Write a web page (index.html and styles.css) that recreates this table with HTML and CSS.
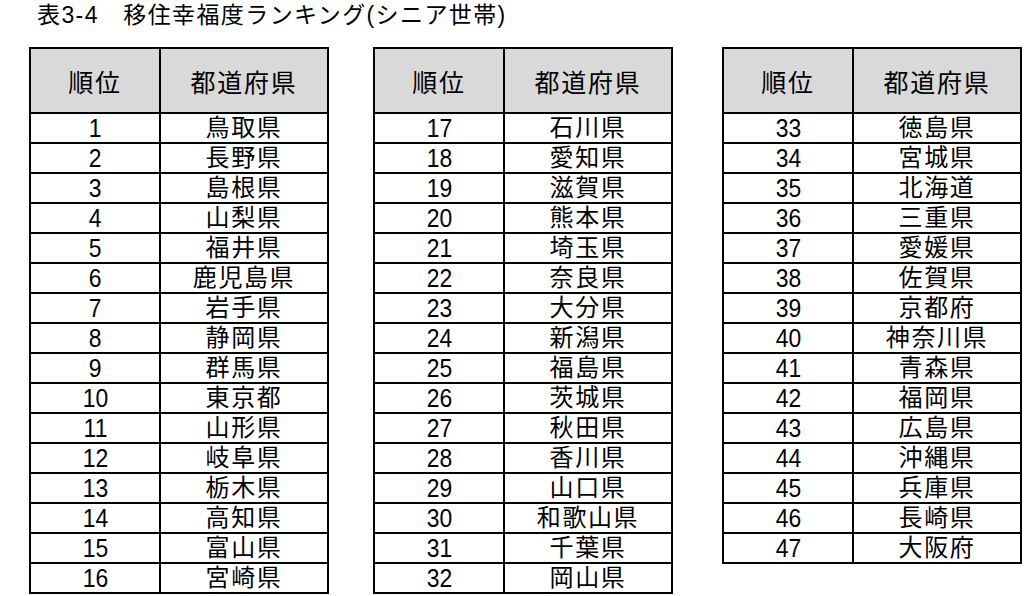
FILE: index.html
```html
<!DOCTYPE html>
<html lang="ja">
<head>
<meta charset="utf-8">
<title>移住幸福度ランキング（シニア世帯）</title>
<link rel="stylesheet" href="styles.css">
</head>
<body>
<div class="page">
  <h1 class="title">表3-4　移住幸福度ランキング(シニア世帯)</h1>
  <div class="tables">
    <table class="rank">
      <colgroup><col class="c1"><col class="c2"></colgroup>
      <thead><tr><th>順位</th><th>都道府県</th></tr></thead>
      <tbody>
        <tr><td><span class="n">1</span></td><td>鳥取県</td></tr>
        <tr><td><span class="n">2</span></td><td>長野県</td></tr>
        <tr><td><span class="n">3</span></td><td>島根県</td></tr>
        <tr><td><span class="n">4</span></td><td>山梨県</td></tr>
        <tr><td><span class="n">5</span></td><td>福井県</td></tr>
        <tr><td><span class="n">6</span></td><td>鹿児島県</td></tr>
        <tr><td><span class="n">7</span></td><td>岩手県</td></tr>
        <tr><td><span class="n">8</span></td><td>静岡県</td></tr>
        <tr><td><span class="n">9</span></td><td>群馬県</td></tr>
        <tr><td><span class="n">10</span></td><td>東京都</td></tr>
        <tr><td><span class="n">11</span></td><td>山形県</td></tr>
        <tr><td><span class="n">12</span></td><td>岐阜県</td></tr>
        <tr><td><span class="n">13</span></td><td>栃木県</td></tr>
        <tr><td><span class="n">14</span></td><td>高知県</td></tr>
        <tr><td><span class="n">15</span></td><td>富山県</td></tr>
        <tr><td><span class="n">16</span></td><td>宮崎県</td></tr>
      </tbody>
    </table>
    <table class="rank">
      <colgroup><col class="c1"><col class="c2"></colgroup>
      <thead><tr><th>順位</th><th>都道府県</th></tr></thead>
      <tbody>
        <tr><td><span class="n">17</span></td><td>石川県</td></tr>
        <tr><td><span class="n">18</span></td><td>愛知県</td></tr>
        <tr><td><span class="n">19</span></td><td>滋賀県</td></tr>
        <tr><td><span class="n">20</span></td><td>熊本県</td></tr>
        <tr><td><span class="n">21</span></td><td>埼玉県</td></tr>
        <tr><td><span class="n">22</span></td><td>奈良県</td></tr>
        <tr><td><span class="n">23</span></td><td>大分県</td></tr>
        <tr><td><span class="n">24</span></td><td>新潟県</td></tr>
        <tr><td><span class="n">25</span></td><td>福島県</td></tr>
        <tr><td><span class="n">26</span></td><td>茨城県</td></tr>
        <tr><td><span class="n">27</span></td><td>秋田県</td></tr>
        <tr><td><span class="n">28</span></td><td>香川県</td></tr>
        <tr><td><span class="n">29</span></td><td>山口県</td></tr>
        <tr><td><span class="n">30</span></td><td>和歌山県</td></tr>
        <tr><td><span class="n">31</span></td><td>千葉県</td></tr>
        <tr><td><span class="n">32</span></td><td>岡山県</td></tr>
      </tbody>
    </table>
    <table class="rank rank-last">
      <colgroup><col class="c1"><col class="c2"></colgroup>
      <thead><tr><th>順位</th><th>都道府県</th></tr></thead>
      <tbody>
        <tr><td><span class="n">33</span></td><td>徳島県</td></tr>
        <tr><td><span class="n">34</span></td><td>宮城県</td></tr>
        <tr><td><span class="n">35</span></td><td>北海道</td></tr>
        <tr><td><span class="n">36</span></td><td>三重県</td></tr>
        <tr><td><span class="n">37</span></td><td>愛媛県</td></tr>
        <tr><td><span class="n">38</span></td><td>佐賀県</td></tr>
        <tr><td><span class="n">39</span></td><td>京都府</td></tr>
        <tr><td><span class="n">40</span></td><td>神奈川県</td></tr>
        <tr><td><span class="n">41</span></td><td>青森県</td></tr>
        <tr><td><span class="n">42</span></td><td>福岡県</td></tr>
        <tr><td><span class="n">43</span></td><td>広島県</td></tr>
        <tr><td><span class="n">44</span></td><td>沖縄県</td></tr>
        <tr><td><span class="n">45</span></td><td>兵庫県</td></tr>
        <tr><td><span class="n">46</span></td><td>長崎県</td></tr>
        <tr><td><span class="n">47</span></td><td>大阪府</td></tr>
      </tbody>
    </table>
  </div>
</div>
</body>
</html>
```
FILE: styles.css
```css
html, body {
  margin: 0;
  padding: 0;
  background: #ffffff;
}
body {
  font-family: "Liberation Sans", "Noto Sans CJK JP", sans-serif;
  color: #000000;
}
.page {
  padding-left: 29px;
}
.title {
  margin: 0 0 16px 8px;
  font-size: 23px;
  font-weight: normal;
  line-height: 31px;
  letter-spacing: 1.4px;
  white-space: nowrap;
}
.tables {
  display: flex;
  align-items: flex-start;
  column-gap: 44px;
}
.rank {
  border-collapse: collapse;
  width: 300px;
  flex: 0 0 300px;
  table-layout: fixed;
  border: 2px solid #000;
}
.rank-last {
  margin-left: 5px;
}
.rank .c1 { width: 130px; }
.rank th, .rank td {
  border: 2px solid #000;
  padding: 0;
  text-align: center;
  vertical-align: middle;
  overflow: visible;
  white-space: nowrap;
}
.rank th {
  background: #d9d9d9;
  height: 63px;
  font-size: 25px;
  font-weight: normal;
  letter-spacing: 1.8px;
}
.rank td {
  height: 28px;
  line-height: 26px;
  font-size: 24px;
  letter-spacing: 1.6px;
}
.n {
  display: inline-block;
  font-size: 26px;
  letter-spacing: 0;
  transform: scaleX(0.88);
}
```
